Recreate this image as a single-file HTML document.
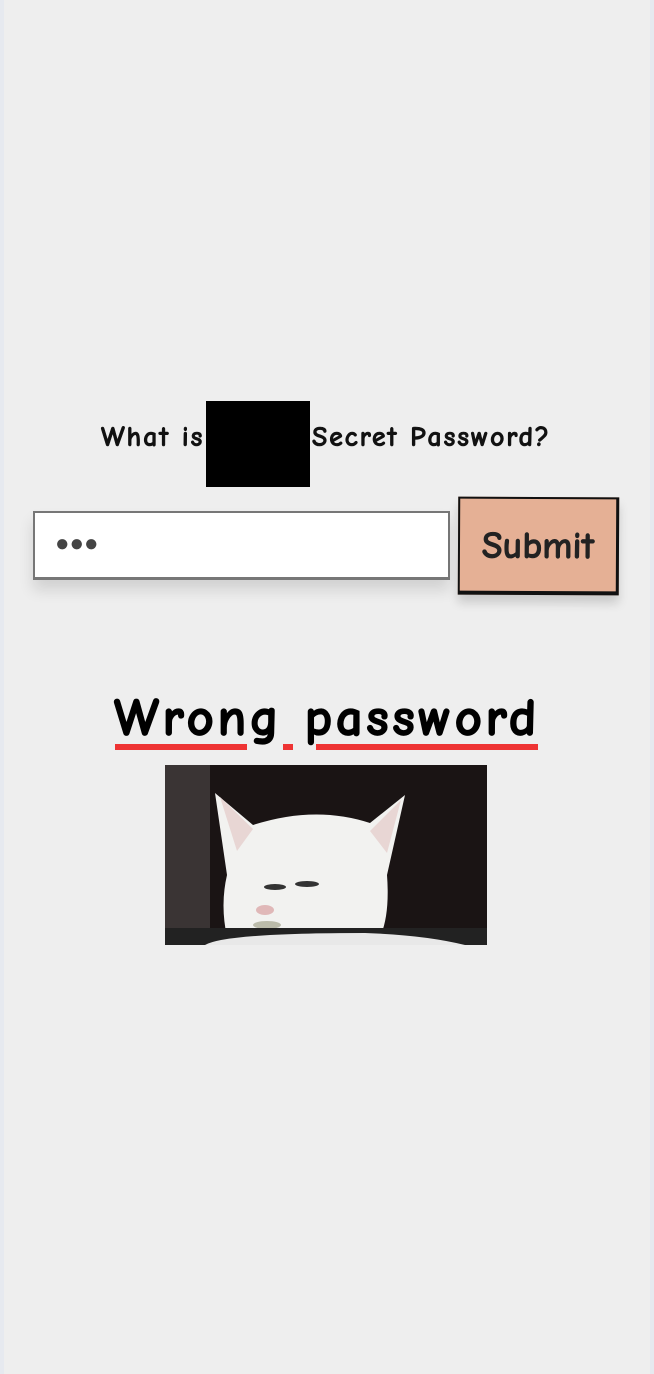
<!DOCTYPE html>
<html><head><style>
html,body{margin:0;padding:0}
body{width:654px;height:1374px;background:#eeeeee;position:relative;overflow:hidden;font-family:"Comic Neue","Liberation Sans",sans-serif}
.edge{position:absolute;top:0;bottom:0;width:4px;background:#e6e9ef}
.q{position:absolute;top:421px;font-size:28px;font-weight:bold;color:#111;letter-spacing:1.8px;white-space:nowrap;-webkit-text-stroke:0.6px #111}
.blk{position:absolute;left:206px;top:401px;width:104px;height:86px;background:#000}
.inp{position:absolute;left:33px;top:511px;width:413px;height:64px;background:#fff;border:2px solid #777;border-bottom-width:3px;box-shadow:0 10px 14px rgba(0,0,0,.12)}
.dots{position:absolute;left:20px;top:16px;font-size:24px;color:#444}
.btn{position:absolute;left:458px;top:497px;width:161px;height:98px;background:#e5b095;border:2px solid #111;border-bottom-width:4px;border-right-width:3px;box-sizing:border-box;transform:rotate(0.3deg);font-size:38px;font-weight:bold;text-align:center;line-height:94px;color:#222;box-shadow:0 8px 10px rgba(0,0,0,.15);-webkit-text-stroke:0.6px #222}
.wp{position:absolute;left:100px;top:688px;width:454px;text-align:center;font-size:53px;font-weight:bold;color:#000;letter-spacing:3.5px;white-space:nowrap;-webkit-text-stroke:1.2px #000}
.ul{position:absolute;top:744px;height:6px;background:#e33}
</style></head><body>
<div class="edge" style="left:0"></div><div class="edge" style="right:0"></div>
<div class="q" style="left:101px">What is</div>
<div class="blk"></div>
<div class="q" style="left:312px">Secret Password?</div>
<div class="inp"><div class="dots">●●●</div></div>
<div class="btn">Submit</div>
<div class="ul" style="left:115px;width:132px"></div>
<div class="ul" style="left:283px;width:10px"></div>
<div class="ul" style="left:316px;width:222px"></div>
<div class="wp">Wrong password</div>
<svg style="position:absolute;left:165px;top:765px" width="322" height="180" viewBox="0 0 322 180">
<rect width="322" height="180" fill="#1a1414"/>
<rect x="0" y="0" width="45" height="180" fill="#3a3434"/>
<path d="M50 28 L88 60 Q150 40 205 58 L240 30 L222 110 Q225 150 215 172 L62 172 Q55 140 62 110 Z" fill="#f2f2f0"/>
<path d="M55 32 L88 64 L72 86 Z" fill="#e8d6d4"/>
<path d="M236 35 L205 66 L222 88 Z" fill="#e8d6d4"/>
<ellipse cx="110" cy="122" rx="11" ry="3" fill="#333"/>
<ellipse cx="142" cy="119" rx="12" ry="3" fill="#333"/>
<ellipse cx="100" cy="145" rx="9" ry="5" fill="#e0b8b8"/>
<ellipse cx="102" cy="160" rx="14" ry="4" fill="#bba"/>
<rect x="0" y="163" width="322" height="17" fill="#222"/>
<path d="M40 180 Q60 168 200 168 Q260 170 300 180 Z" fill="#e8e8e8"/>
</svg>
</body></html>
